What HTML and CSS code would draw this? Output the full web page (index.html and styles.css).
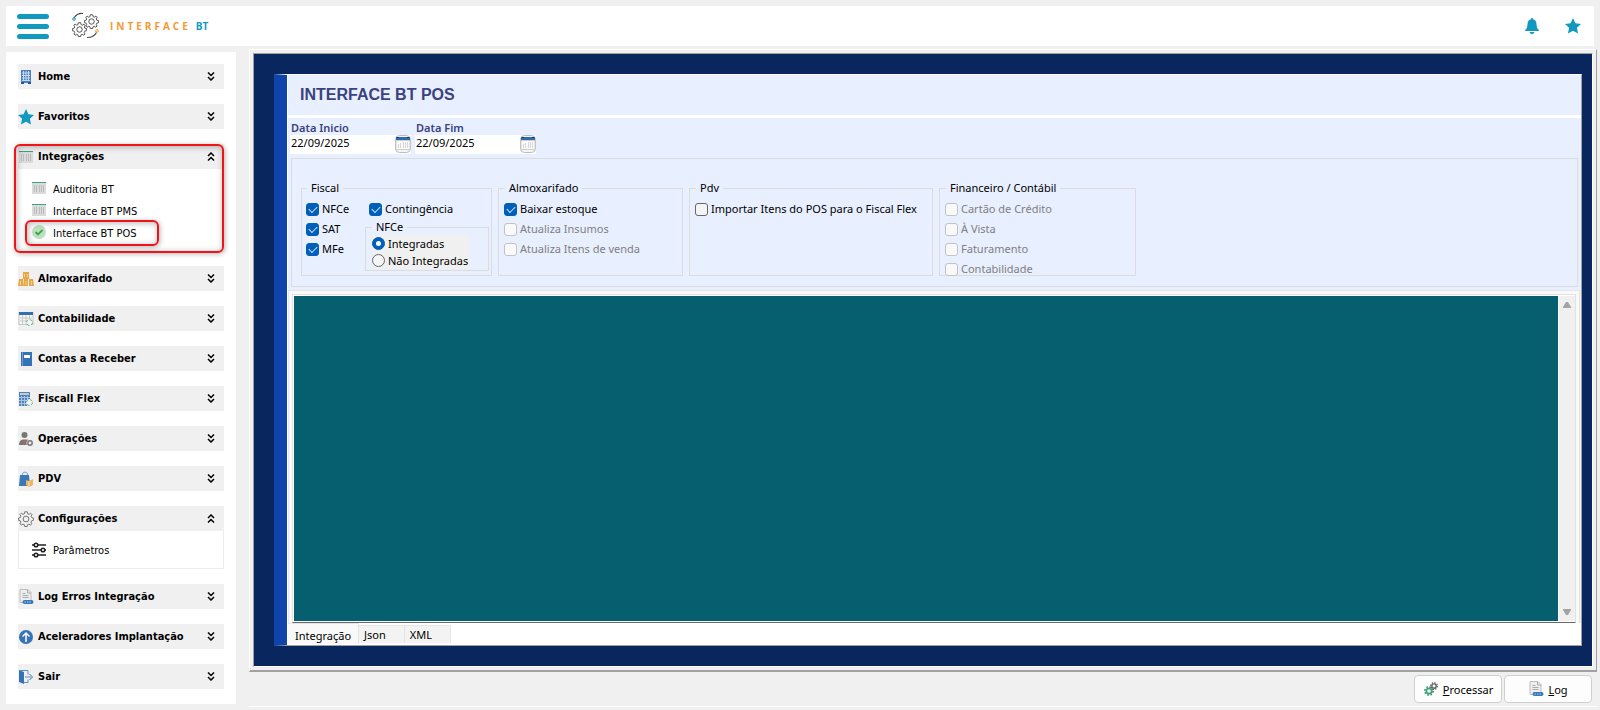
FILE: index.html
```html
<!DOCTYPE html>
<html lang="pt-BR">
<head>
    <meta charset="UTF-8">
    <meta name="viewport" content="width=device-width, initial-scale=1.0">
    <title>Interface BT POS</title>
    <link rel="stylesheet" href="styles.css">
</head>
<body>
<!-- Ícones reutilizados -->
<svg class="sprite" aria-hidden="true">
    <symbol id="down" viewBox="0 0 8 9">
        <path d="M1 .5l3 3 3-3M1 5l3 3 3-3" fill="none" stroke="#000" stroke-width="1.5"/>
    </symbol>
    <symbol id="up" viewBox="0 0 8 9">
        <path d="M1 4l3-3 3 3M1 8.5l3-3 3 3" fill="none" stroke="#000" stroke-width="1.5"/>
    </symbol>
    <symbol id="star" viewBox="0 0 16 16">
        <path d="M8 0l2.4 5.2 5.6.7-4.1 3.9 1.1 5.7L8 12.8 3 15.5l1.1-5.7L0 5.9l5.6-.7z" fill="#1199bf"/>
    </symbol>
    <symbol id="barcode" viewBox="0 0 14 12">
        <path d="M0 0h14v12H0z" fill="#dadada"/>
        <path d="M0 .5h14" stroke="#3fa37c"/>
        <path d="M2.5 3v7M4.5 3v7M7.5 3v7M9.5 3v7M11.5 3v7" stroke="#bdbdbd"/>
    </symbol>
    <symbol id="gear" viewBox="0 0 16 16">
        <circle cx="8" cy="8" r="6.5" fill="none" stroke="currentColor" stroke-width="3" stroke-dasharray="2.55 2.55"/>
        <circle cx="8" cy="8" r="4.3" fill="none" stroke="currentColor" stroke-width="2.8"/>
    </symbol>
    <symbol id="cog" viewBox="0 0 16 16">
        <path d="M6.7.8h2.6l.4 2 1.3.6L12.7 2.2l1.3 1.3-.9 1.7.6 1.4 1.7.4v2.3l-1.8.5-.6 1.3.9 1.7-1.4 1.3-1.6-1-1.3.6-.4 1.8H6.7l-.4-1.8-1.3-.6-1.7 1L2 12.8l.9-1.7-.6-1.3L.6 9.3V7l1.7-.4.6-1.4L2 3.5l1.3-1.3L5 3.4l1.3-.6z" fill="none" stroke="currentColor"/>
        <circle cx="8" cy="8" r="2.9" fill="none" stroke="currentColor"/>
    </symbol>
    <symbol id="log" viewBox="0 0 15 16">
        <path d="M1.5.5h8l3 3v10h-11z" fill="#eee" stroke="#bdbdbd"/>
        <path d="M9 .5V4h3.5M4 4.5h3M4 6.5h6M4 8.5h6" fill="none" stroke="#aaa"/>
        <rect x="4" y="11" width="11" height="4" rx="2" fill="#3b78b8"/>
        <path d="M6 13h7" stroke="#a9cbed" stroke-dasharray="1.5 1"/>
    </symbol>
    <symbol id="calendar" viewBox="0 0 16 18">
        <rect x=".5" y=".5" width="15" height="17" rx="4" fill="#f5f5f5" stroke="#bcbcbc"/>
        <path d="M1 5.5h14v8q0 1-1 1H2q-1 0-1-1z" fill="#fafafa" stroke="#cdcdcd"/>
        <path d="M1 5V2h14v3z" fill="#2f6eae"/>
        <path d="M2 2.5h2M12 2.5h2" stroke="#333"/>
        <path d="M3.5 9v4M5.5 8v5M8.5 7v6M10.5 7v6M12.5 7v6" stroke="#d6d6d6"/>
    </symbol>
</svg>

<header class="topbar">
    <button class="icon-button menu-button" aria-label="Menu"><span></span><span></span><span></span></button>
    <div class="logo">
        <svg class="logo-mark" viewBox="0 0 28 28" aria-hidden="true">
            <g color="#4a4a4a">
                <use href="#cog" x="0" y="10" width="15" height="15"/>
                <use href="#cog" x="12" y="2" width="15" height="15"/>
            </g>
            <path d="M2 6Q5 1 11 1.5M15 25.5q7 0 9.5-5" fill="none" stroke="#4a4a4a" stroke-width="1.2"/>
            <circle cx="2" cy="7" r="1.3" fill="none" stroke="#1199bf"/>
            <circle cx="25" cy="19" r="1.3" fill="none" stroke="#f39a35"/>
        </svg>
        <span class="logo-name">INTERFACE</span>
        <span class="logo-bt">BT</span>
    </div>
    <button class="icon-button" aria-label="Notificações">
        <svg width="16" height="16" viewBox="0 0 16 16"><path d="M8 0q1 0 1.2 1.2Q12.5 2 12.5 6.5q0 4 2.3 5.500v1H1.2v-1q2.3-1.5 2.3-5.500Q3.5 2 6.8 1.2 7 0 8 0zM5.5 14h5Q10 16 8 16t-2.5-2z" fill="#1199bf"/></svg>
    </button>
    <button class="icon-button" aria-label="Favoritos">
        <svg width="16" height="16"><use href="#star"/></svg>
    </button>
</header>

<div class="layout">
    <nav class="sidebar">
        <button class="menu-head">
            <svg class="icon" viewBox="0 0 16 16"><path d="M3 1h10v13H3z" fill="#4d81bd"/><path d="M4 4h8M4 6.5h8M4 9h8M4 11.5h8M5.5 2v10M8 2v10M10.5 2v10" stroke="#c4d9ef"/><path d="M3 13h3v2H3zM10 13h3v2h-3z" fill="#235a9c"/></svg>
            Home <svg class="arrow"><use href="#down"/></svg>
        </button>
        <button class="menu-head">
            <svg class="icon"><use href="#star"/></svg>
            Favoritos <svg class="arrow"><use href="#down"/></svg>
        </button>
        <div class="menu-group highlighted">
            <button class="menu-head">
                <svg class="icon"><use href="#barcode" x="1" y="2" width="14" height="12"/></svg>
                Integrações <svg class="arrow"><use href="#up"/></svg>
            </button>
            <div class="submenu submenu-tall">
                <a href="#auditoria"><svg class="icon"><use href="#barcode" x="1" y="1" width="14" height="12"/></svg>Auditoria BT</a>
                <a href="#pms"><svg class="icon"><use href="#barcode" x="1" y="1" width="14" height="12"/></svg>Interface BT PMS</a>
                <a href="#pos" class="selected"><svg class="icon" viewBox="0 0 16 16"><circle cx="8" cy="7" r="7" fill="#bfe0bf"/><path d="M4.5 7l2.5 2.5L11.5 5" fill="none" stroke="#3fa84c" stroke-width="1.8"/></svg>Interface BT POS</a>
            </div>
        </div>
        <button class="menu-head">
            <svg class="icon" viewBox="0 0 16 16"><path d="M5 1h6v7H5zM1 8h4l1 7H0zM6 8h4v7H6zM11 8h4l1 7h-5z" fill="#e6a846"/><path d="M6.5 3v3M9.5 3v3M2.5 10v4M8 10v4M13.5 10v4" fill="none" stroke="#f6d394"/></svg>
            Almoxarifado <svg class="arrow"><use href="#down"/></svg>
        </button>
        <button class="menu-head">
            <svg class="icon" viewBox="0 0 16 16"><path d="M1 1.5h14v12H1z" fill="#f7f7f7" stroke="#c4c4c4"/><path d="M1 1h14v3H1z" fill="#356fae"/><path d="M2 7h12M2 10h7M4.5 4v9M8 4v9M11.5 4v4" stroke="#c9c9c9"/><circle cx="11.5" cy="11.5" r="3" fill="#f4f4f4" stroke="#5db88d" stroke-dasharray="3 1.7"/></svg>
            Contabilidade <svg class="arrow"><use href="#down"/></svg>
        </button>
        <button class="menu-head">
            <svg class="icon" viewBox="0 0 16 16"><path d="M3 1h11v14H3z" fill="#3573b6"/><path d="M4.5 1v14" stroke="#6c9dd0"/><path d="M6 4h6v3H6z" fill="#fff"/></svg>
            Contas a Receber <svg class="arrow"><use href="#down"/></svg>
        </button>
        <button class="menu-head">
            <svg class="icon" viewBox="0 0 16 16"><path d="M1 1h11v14H1z" fill="#4f83bd"/><path d="M2 2h9v2H2z" fill="#c9c9c9"/><path d="M1 6.5h11M1 9.5h11M1 12.5h11M3.5 5v10M6.5 5v10M9.5 5v10" stroke="#a9c3df"/><circle cx="11.5" cy="11.5" r="3.5" fill="#f4f4f4"/><circle cx="11.5" cy="11.5" r="3" fill="none" stroke="#5db88d" stroke-dasharray="3 1.7"/></svg>
            Fiscall Flex <svg class="arrow"><use href="#down"/></svg>
        </button>
        <button class="menu-head">
            <svg class="icon" viewBox="0 0 16 16"><circle cx="6.5" cy="4" r="3" fill="#777"/><path d="M1 14q0-5 4-5.5h4q2 0 2.5 2v3.5z" fill="#777"/><path d="M6 9l1 4.5L8 9z" fill="#e65342"/><circle cx="12" cy="12" r="3.5" fill="#f0f0f0"/><circle cx="12" cy="12" r="2.2" fill="#eee" stroke="#777" stroke-width="1.5"/></svg>
            Operações <svg class="arrow"><use href="#down"/></svg>
        </button>
        <button class="menu-head">
            <svg class="icon" viewBox="0 0 16 16"><path d="M4 5q0-4 3-4t3 4" fill="none" stroke="#7aa7d5"/><path d="M2 4h9l1 11H1z" fill="#3b78b8"/><path d="M8 9l3 1 4-2v6l-4 2-3-2z" fill="#e8b45c"/><path d="M11 10v5" stroke="#fae2b5"/></svg>
            PDV <svg class="arrow"><use href="#down"/></svg>
        </button>
        <div class="menu-group">
            <button class="menu-head">
                <svg class="icon gray"><use href="#cog"/></svg>
                Configurações <svg class="arrow"><use href="#up"/></svg>
            </button>
            <div class="submenu">
                <a href="#parametros"><svg class="icon" viewBox="0 0 16 16"><path d="M1 3h14M1 8h14M1 13h14" stroke="#222" stroke-width="1.5"/><g fill="#fff" stroke="#222" stroke-width="1.5"><circle cx="5" cy="3" r="1.8"/><circle cx="12" cy="8" r="1.8"/><circle cx="5" cy="13" r="1.8"/></g></svg>Parâmetros</a>
            </div>
        </div>
        <button class="menu-head">
            <svg class="icon"><use href="#log"/></svg>
            Log Erros Integração <svg class="arrow"><use href="#down"/></svg>
        </button>
        <button class="menu-head">
            <svg class="icon" viewBox="0 0 16 16"><circle cx="8" cy="8" r="7" fill="#3573b6"/><path d="M8 13V4M4.5 7.5L8 4l3.5 3.5" fill="none" stroke="#fff" stroke-width="1.5"/></svg>
            Aceleradores Implantação <svg class="arrow"><use href="#down"/></svg>
        </button>
        <button class="menu-head">
            <svg class="icon" viewBox="0 0 16 16"><path d="M1 1l5 2v12l-5-2z" fill="#3573b6"/><path d="M2 1.5h8v4M10 10.5v3H6M7 8h6" fill="none" stroke="#5c8fc6"/><path d="M11.5 5l3 3-3 3" fill="none" stroke="#3573b6"/></svg>
            Sair <svg class="arrow"><use href="#down"/></svg>
        </button>
    </nav>

    <div class="content">
        <div class="frame">
            <main class="desktop">
                <section class="window">
                    <h1>INTERFACE BT POS</h1>

                    <div class="dates">
                        <div class="date-field">
                            <label for="data-inicio">Data Inicio</label>
                            <div class="date-box">
                                <input type="text" id="data-inicio" value="22/09/2025">
                                <button class="icon-button" aria-label="Escolher data inicial"><svg width="16" height="18"><use href="#calendar"/></svg></button>
                            </div>
                        </div>
                        <div class="date-field">
                            <label for="data-fim">Data Fim</label>
                            <div class="date-box">
                                <input type="text" id="data-fim" value="22/09/2025">
                                <button class="icon-button" aria-label="Escolher data final"><svg width="16" height="18"><use href="#calendar"/></svg></button>
                            </div>
                        </div>
                    </div>

                    <div class="filters">
                        <fieldset class="fiscal">
                            <legend>Fiscal</legend>
                            <div class="options">
                                <label><input type="checkbox" checked>NFCe</label>
                                <label><input type="checkbox" checked>SAT</label>
                                <label><input type="checkbox" checked>MFe</label>
                            </div>
                            <div class="fiscal-side">
                                <label><input type="checkbox" checked>Contingência</label>
                                <fieldset class="nfce">
                                    <legend>NFCe</legend>
                                    <label><input type="radio" name="nfce" checked>Integradas</label>
                                    <label><input type="radio" name="nfce">Não Integradas</label>
                                </fieldset>
                            </div>
                        </fieldset>
                        <fieldset class="almoxarifado">
                            <legend>Almoxarifado</legend>
                            <div class="options">
                                <label><input type="checkbox" checked>Baixar estoque</label>
                                <label class="disabled"><input type="checkbox" disabled>Atualiza Insumos</label>
                                <label class="disabled"><input type="checkbox" disabled>Atualiza Itens de venda</label>
                            </div>
                        </fieldset>
                        <fieldset class="pdv">
                            <legend>Pdv</legend>
                            <div class="options">
                                <label><input type="checkbox">Importar Itens do POS para o Fiscal Flex</label>
                            </div>
                        </fieldset>
                        <fieldset class="financeiro">
                            <legend>Financeiro / Contábil</legend>
                            <div class="options">
                                <label class="disabled"><input type="checkbox" disabled>Cartão de Crédito</label>
                                <label class="disabled"><input type="checkbox" disabled>À Vista</label>
                                <label class="disabled"><input type="checkbox" disabled>Faturamento</label>
                                <label class="disabled"><input type="checkbox" disabled>Contabilidade</label>
                            </div>
                        </fieldset>
                    </div>

                    <div class="tab-page">
                        <div class="memo">
                            <div class="memo-text"></div>
                            <div class="scrollbar">
                                <button class="icon-button" aria-label="Rolar para cima"><svg width="8" height="6"><path d="M0 6V5l3-5h2l3 5v1z" fill="#a3a3a3"/></svg></button>
                                <button class="icon-button" aria-label="Rolar para baixo"><svg width="8" height="6"><path d="M0 0v1l3 5h2l3-5V0z" fill="#a3a3a3"/></svg></button>
                            </div>
                        </div>
                    </div>
                    <div class="tabs">
                        <button class="tab active">Integração</button>
                        <button class="tab">Json</button>
                        <button class="tab">XML</button>
                    </div>
                </section>
            </main>
        </div>

        <footer class="actions">
            <button class="action">
                <svg width="16" height="16" viewBox="0 0 16 16"><g color="#3fa37c"><use href="#gear" x="1" y="5" width="10" height="10"/></g><g color="#666"><use href="#gear" x="7" y="1" width="8" height="8"/></g></svg>
                <span><u>P</u>rocessar</span>
            </button>
            <button class="action">
                <svg width="16" height="16"><use href="#log"/></svg>
                <span><u>L</u>og</span>
            </button>
        </footer>
    </div>
</div>
</body>
</html>
```
FILE: styles.css
```css
:root {
    --color-background: #f0f0f0;
    --color-accent: #1199bf;
    --color-navy: #0a265e;
    --color-blue: #1144aa;
    --color-panel: #e8efff;
    --color-heading: #3a4280;
    --color-memo: #065f6e;
    --color-check: #005fb8;
    --color-line: #dcdcdc;
    --color-shadow: #a0a0a0;
}

* {
    box-sizing: border-box;
}

body {
    display: flex;
    flex-direction: column;
    gap: 3px;
    min-height: 100vh;
    margin: 0;
    padding: 6px 3px 3px 6px;
    background-color: var(--color-background);
    color: #000;
    font-family: "Noto Sans", sans-serif;
    font-size: 11px;
}

button, input {
    font: inherit;
    color: inherit;
}

.sprite {
    position: absolute;
    width: 0;
    height: 0;
}

.icon-button {
    display: flex;
    padding: 0;
    border: none;
    background: none;
    cursor: pointer;
}

/* Barra superior */
.topbar {
    display: flex;
    align-items: center;
    gap: 25px;
    height: 40px;
    margin-right: 3px;
    padding: 0 13px 0 11px;
    background-color: #fff;
}

.menu-button {
    flex-direction: column;
    gap: 5px;
    width: 32px;
}

.menu-button span {
    width: 100%;
    height: 5px;
    border-radius: 3px;
    background-color: var(--color-accent);
}

.logo {
    display: flex;
    align-items: center;
    flex: 1;
    font-family: "Open Sans", sans-serif;
    font-weight: bold;
    font-size: 10px;
}

.logo-mark {
    width: 28px;
    height: 28px;
    margin: 0 10px 0 -2px;
}

.logo-name {
    color: #f39a35;
    letter-spacing: 3px;
}

.logo-bt {
    margin-left: 5px;
    color: var(--color-accent);
}

.layout {
    display: flex;
    flex: 1;
    gap: 13px;
}

/* Menu lateral */
.sidebar {
    display: flex;
    flex-direction: column;
    gap: 15px;
    flex: 0 0 230px;
    margin: 3px 0;
    padding: 12px 12px 15px;
    background-color: #fff;
    font-family: "DejaVu Sans Condensed", "DejaVu Sans", sans-serif;
}

.menu-head {
    display: flex;
    align-items: center;
    gap: 4px;
    width: 100%;
    height: 25px;
    padding: 0 9px 0 0;
    border: none;
    background-color: var(--color-background);
    font-weight: bold;
    cursor: pointer;
}

.icon {
    width: 16px;
    height: 16px;
    flex: none;
}

.gray {
    color: #777;
}

.arrow {
    width: 8px;
    height: 9px;
    margin-left: auto;
}

.submenu {
    padding: 8px 12px 7px;
    border: 1px solid #ececec;
    border-top: none;
}

.submenu-tall {
    padding-top: 9px;
    border: none;
}

.submenu a {
    display: flex;
    align-items: center;
    gap: 6px;
    height: 22px;
    color: #000;
    text-decoration: none;
}

.submenu-tall a {
    padding-left: 1px;
}

/* Destaques em vermelho */
.highlighted, .selected {
    position: relative;
}

.highlighted::after, .selected::after {
    content: "";
    position: absolute;
    border: 2px solid #f01418;
    border-radius: 6px;
    box-shadow: 1px 1px 5px rgba(0, 0, 0, 0.3), inset 1px 1px 6px rgba(0, 0, 0, 0.3);
    pointer-events: none;
}

.highlighted::after {
    inset: 0 0 -2px -4px;
}

.selected::after {
    inset: -2px 53px -2px -5px;
}

/* Área principal */
.content {
    display: flex;
    flex-direction: column;
    flex: 1;
    min-width: 0;
}

.frame {
    display: flex;
    flex: 1;
    padding: 3px;
    border: 1px solid #fff;
    border-right-color: var(--color-shadow);
    border-bottom: 2px solid var(--color-shadow);
}

.desktop {
    display: flex;
    flex: 1;
    padding: 20px 10px 20px 20px;
    border: 1px solid #fff;
    border-top-color: var(--color-shadow);
    border-left-color: var(--color-shadow);
    background-color: var(--color-navy);
}

.window {
    display: flex;
    flex-direction: column;
    flex: 1;
    border: 1px solid var(--color-shadow);
    border-top-color: #fff;
    border-left: 13px solid var(--color-blue);
    background-color: var(--color-panel);
    box-shadow: inset 1px 0 #fff;
    line-height: 16px;
}

h1 {
    margin: 0;
    padding: 10px 13px;
    border-bottom: 3px solid #fff;
    color: var(--color-heading);
    font-family: "Liberation Sans", sans-serif;
    font-size: 16px;
    line-height: 20px;
}

.dates {
    display: flex;
    gap: 4px;
    padding: 3px 3px 4px;
}

.date-field label {
    display: block;
    height: 14px;
    padding-left: 1px;
    color: var(--color-heading);
    font-weight: 600;
    line-height: 14px;
}

.date-box {
    display: flex;
    align-items: flex-start;
    width: 121px;
    height: 19px;
    background-color: #fff;
}

.date-box input {
    flex: 1;
    min-width: 0;
    padding: 0 1px;
    border: none;
    outline: none;
    background: none;
}

/* Filtros */
.filters {
    display: flex;
    gap: 6px;
    margin: 0 3px 0 4px;
    padding: 21px 9px 10px;
    border: 1px solid var(--color-line);
}

fieldset {
    height: 96px;
    margin: 0;
    padding: 5px 5px 0;
    border: 1px solid var(--color-line);
}

legend {
    margin-left: 1px;
    padding: 0 4px;
}

.fiscal {
    display: flex;
    width: 191px;
    padding: 5px 2px 0 4px;
}

.almoxarifado {
    width: 185px;
}

.pdv {
    width: 244px;
}

.financeiro {
    width: 197px;
}

.options {
    display: flex;
    flex-direction: column;
    gap: 4px;
}

.fiscal .options {
    width: 59px;
}

.fiscal-side {
    width: 124px;
}

.fiscal-side > label {
    padding-left: 4px;
}

fieldset label {
    display: flex;
    align-items: center;
    gap: 3px;
    height: 16px;
    white-space: nowrap;
}

.disabled {
    color: #808080;
}

.nfce {
    height: 52px;
    margin-top: 2px;
    padding: 0 6px;
}

.nfce legend {
    margin-left: 0;
}

.nfce label {
    width: 98px;
    height: 17px;
    background-color: var(--color-background);
}

input[type="checkbox"], input[type="radio"] {
    display: grid;
    place-content: center;
    flex: none;
    width: 13px;
    height: 13px;
    margin: 0;
    appearance: none;
    border: 1px solid #666;
    border-radius: 3px;
    background-color: #f5f5f5;
}

input[type="radio"] {
    border-radius: 50%;
}

input:checked {
    border-color: var(--color-check);
    background-color: var(--color-check);
}

input[type="radio"]:checked {
    background-color: var(--color-check);
}

input[type="checkbox"]:checked::after {
    content: "";
    width: 7px;
    height: 4px;
    margin-bottom: 2px;
    border: solid #cfe3f7;
    border-width: 0 0 1px 1px;
    transform: rotate(-45deg);
}

input[type="radio"]:checked::after {
    content: "";
    width: 5px;
    height: 5px;
    border-radius: 50%;
    background-color: #fff;
}

input:disabled {
    border-color: #c3c3c3;
    background-color: #f9f9f9;
}

/* Área de texto e abas */
.tab-page {
    display: flex;
    flex: 1;
    margin: 3px 1px 0;
    padding: 3px 3px 0;
    border: 1px solid #e5e5e5;
    border-bottom: none;
    background-color: #f9f9f9;
}

.memo {
    display: flex;
    flex: 1;
    padding: 1px 0 1px 1px;
    border: 1px solid #e3e3e3;
    border-bottom-color: #696969;
    background-color: #fff;
}

.memo-text {
    flex: 1;
    background-color: var(--color-memo);
}

.scrollbar {
    display: flex;
    flex-direction: column;
    justify-content: space-between;
    align-items: center;
    width: 16px;
    margin-left: 1px;
    padding: 6px 0;
    background-color: var(--color-background);
}

.tabs {
    display: flex;
    height: 22px;
    padding: 0 1px 1px;
    background-color: #fff;
}

.tab {
    height: 18px;
    margin-top: 2px;
    padding: 0 18px 0 5px;
    border: 1px solid #e5e5e5;
    border-left: none;
    border-bottom: none;
    background-color: #f3f3f3;
    line-height: 16px;
}

.tab.active {
    height: 21px;
    margin-top: 0;
    padding: 3px 7px 0;
    background-color: #f9f9f9;
}

/* Botões do rodapé */
.actions {
    display: flex;
    justify-content: flex-end;
    gap: 2px;
    padding: 3px 5px 3px 0;
    border-bottom: 1px solid #fff;
}

.action {
    display: flex;
    align-items: center;
    justify-content: center;
    gap: 4px;
    width: 88px;
    height: 28px;
    border: 1px solid #cfcfcf;
    border-radius: 4px;
    background-color: #fdfdfd;
    cursor: pointer;
}
```
